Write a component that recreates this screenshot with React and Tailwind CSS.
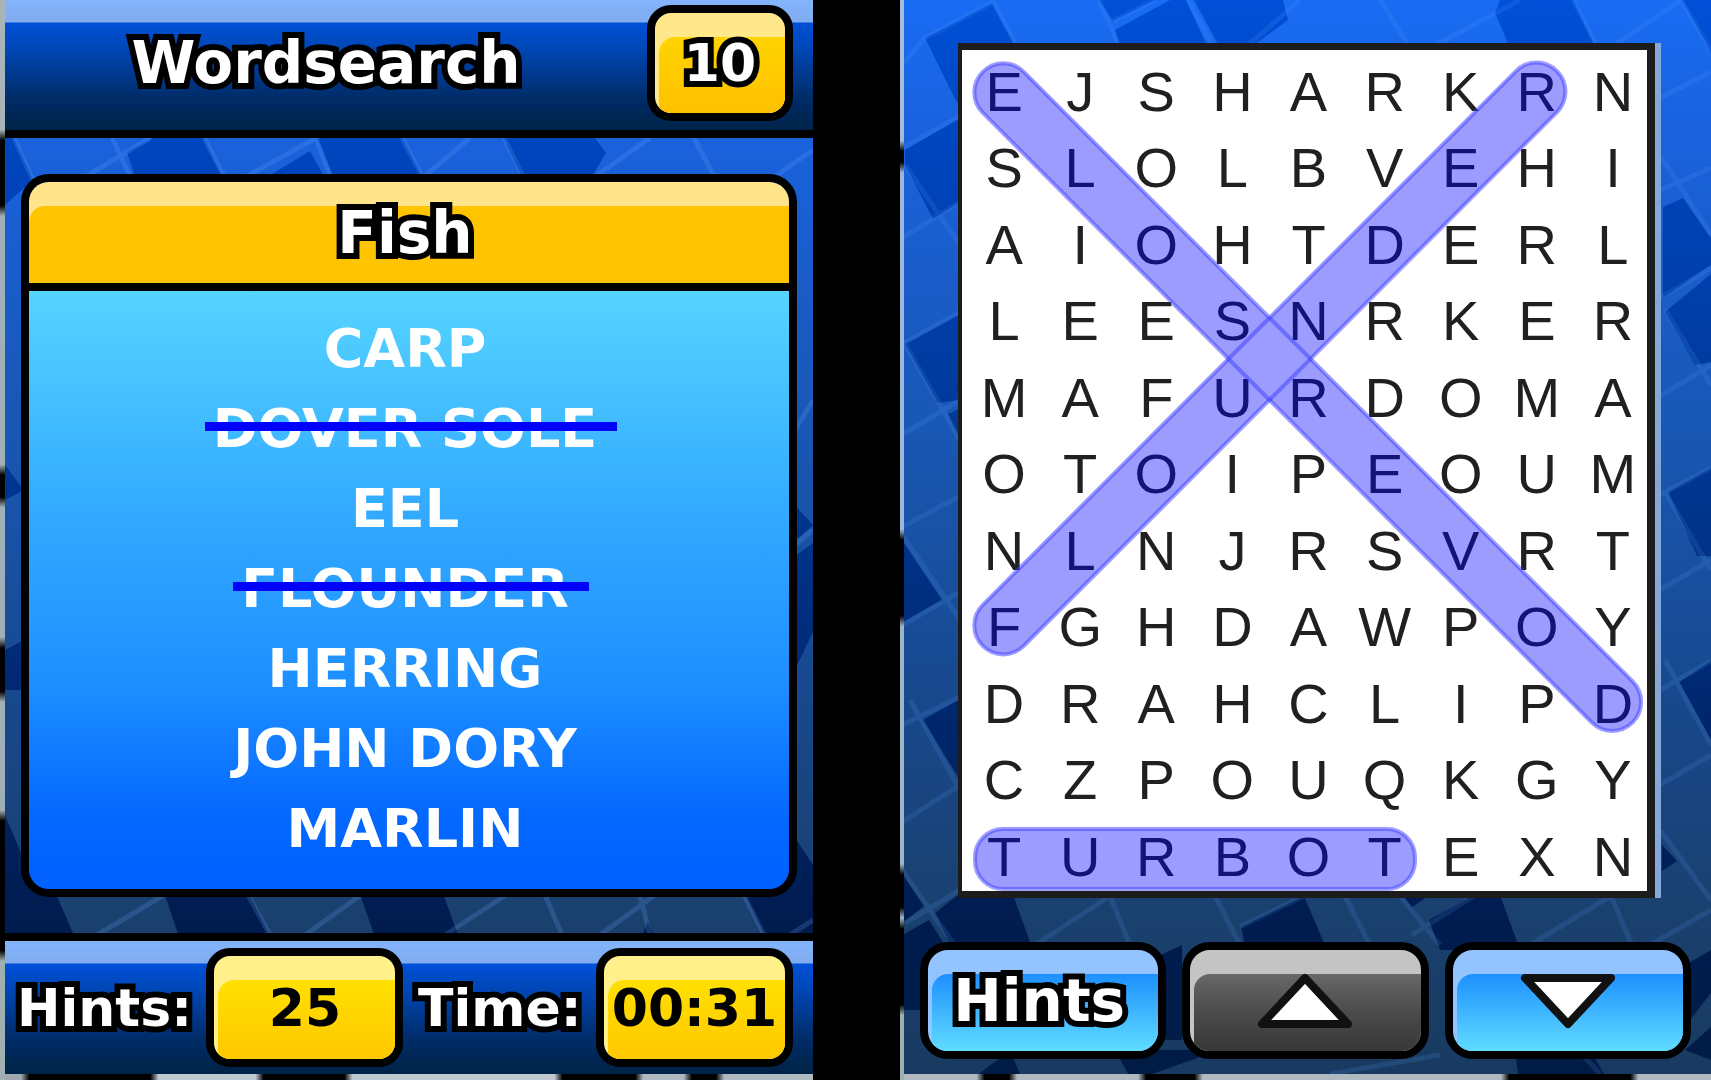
import React from "react";

const WORDS = [
  { text: "CARP", found: false },
  { text: "DOVER SOLE", found: true },
  { text: "EEL", found: false },
  { text: "FLOUNDER", found: true },
  { text: "HERRING", found: false },
  { text: "JOHN DORY", found: false },
  { text: "MARLIN", found: false },
];

const ROWS = [
  "EJSHARKRN",
  "SLOLBVEHI",
  "AIOHTDERL",
  "LEESNRKER",
  "MAFURDOMA",
  "OTOIPEOUM",
  "NLNJRSVRT",
  "FGHDAWPOY",
  "DRAHCLIPD",
  "CZPOUQKGY",
  "TURBOTEXN",
];

const OUTLINE =
  "text-white [-webkit-text-stroke:12px_black] [paint-order:stroke_fill] [stroke-linejoin:round]";

function TileGradients({ id }) {
  return (
    <defs>
      <linearGradient id={id + "Light"} gradientUnits="userSpaceOnUse" x1="0" y1="0" x2="0" y2="1080">
        <stop offset="0" stopColor="#186cf4" />
        <stop offset="0.12" stopColor="#1a62de" />
        <stop offset="0.4" stopColor="#1957b4" />
        <stop offset="0.65" stopColor="#18488c" />
        <stop offset="0.85" stopColor="#1a406e" />
        <stop offset="1" stopColor="#183a60" />
      </linearGradient>
      <linearGradient id={id + "Dark"} gradientUnits="userSpaceOnUse" x1="0" y1="0" x2="0" y2="1080">
        <stop offset="0" stopColor="#0050d8" />
        <stop offset="0.15" stopColor="#0044bc" />
        <stop offset="0.45" stopColor="#003690" />
        <stop offset="0.65" stopColor="#002870" />
        <stop offset="0.85" stopColor="#001c50" />
        <stop offset="1" stopColor="#001c44" />
      </linearGradient>
    </defs>
  );
}

function RightTiles() {
  return (
    <svg className="absolute inset-0 h-full w-full" viewBox="904 0 807 1074" preserveAspectRatio="none" aria-hidden="true">
      <TileGradients id="right" />
      <rect x="900" width="811" height="1080" fill="url(#rightLight)" />
      <g fill="url(#rightDark)">
        <path d="M925 38L992 3L1013 42L1020 60L957 103Z" />
        <path d="M1099 0H1155L1113 21Z" />
        <path d="M1115 30L1170 0H1186L1208 48H1120Z" />
        <path d="M1194 0H1283L1288 20L1250 48H1220Z" />
        <path d="M1500 0H1573L1596 48H1510L1495 13Z" />
        <path d="M1682 0H1711V52Z" />
        <path d="M905 150L960 118V202L933 219L905 165Z" />
        <path d="M905 344L960 314V400L938 403Z" />
        <path d="M948 414L960 408V440Z" />
        <path d="M902 540L942 600L902 623Z" />
        <path d="M923 720L960 699V780Z" />
        <path d="M902 873L924 906L902 923Z" />
        <path d="M902 935L929 920L948 950L920 1010H902Z" />
        <path d="M935 913L958 895H1013L1033 950H953Z" />
        <path d="M1241 927L1304 896L1327 950H1246Z" />
        <path d="M1402 895H1430L1412 907Z" />
        <path d="M1429 920L1474 895H1500L1520 950H1440Z" />
        <path d="M1663 207L1683 198L1711 238V265L1663 298Z" />
        <path d="M1665 312L1711 274V362L1695 365Z" />
        <path d="M1668 492L1711 468V556H1697Z" />
        <path d="M1679 682L1711 661V740Z" />
        <path d="M1662 845L1677 861L1662 871Z" />
        <path d="M1690 962L1711 950V993L1690 1020Z" />
        <path d="M1150 960L1182 945V1040L1160 1040Z" />
        <path d="M979 1074L1010 1050L1020 1074Z" />
        <path d="M1115 1050H1220L1152 1074H1128Z" />
        <path d="M1515 1050H1590L1604 1074H1518Z" />
        <path d="M1685 1050L1711 1027V1060Z" />
      </g>
      <g fill="none" stroke="#5fa0ff" strokeOpacity="0.15" strokeWidth="5">
        <path d="M902 65L925 38L992 3M992 0L1018 48M1113 21L1155 0M1099 0L1120 48M1188 0L1214 48M1245 48L1300 0M1380 0L1410 48M1430 48L1520 0M1573 0L1598 48M1610 48L1681 0L1711 50" />
        <path d="M902 148L960 116M905 165L960 245M902 238L960 202M902 344L960 312M905 344L960 440M902 435L960 400M902 527L960 496M902 535L960 620M902 625L960 592M902 725L960 697M910 700L960 790M902 822L960 785M902 870L958 950M905 923L960 890" />
        <path d="M1660 98L1711 72M1660 155L1711 235M1660 190L1711 168M1660 298L1711 268M1665 310L1711 385M1660 396L1711 365M1660 495L1711 468M1665 492L1711 570M1660 590L1711 560M1660 690L1711 661M1665 660L1711 745M1660 785L1711 755M1660 830L1711 900" />
        <path d="M1035 945L1110 896M1110 896L1130 945M1215 896L1240 945M1240 927L1304 896M1345 896L1370 945M1400 896L1440 945M1412 935L1474 896M1530 945L1611 896M1611 896L1632 945M1650 945L1711 910M1330 1074L1440 1055M1580 1052L1600 1074" />
      </g>
    </svg>
  );
}

function LeftTiles() {
  return (
    <svg className="absolute inset-0 h-full w-full" viewBox="5 0 808 1074" preserveAspectRatio="none" aria-hidden="true">
      <TileGradients id="left" />
      <rect x="5" width="808" height="1080" fill="url(#leftLight)" />
      <g fill="url(#leftDark)">
        <path d="M5 130H10L33 180L5 205Z" />
        <path d="M127 152L153 138V130H200L224 180H136Z" />
        <path d="M262 180L310 151L326 180Z" />
        <path d="M314 130H398L424 180H334Z" />
        <path d="M500 130H589L606 153L590 180H523Z" />
        <path d="M5 465L24 490L5 500Z" />
        <path d="M5 650L24 640V690H5Z" />
        <path d="M5 815L24 860V890L5 910Z" />
        <path d="M790 500L813 525L790 545Z" />
        <path d="M790 560L813 543V632L790 680Z" />
        <path d="M790 830L813 865V900H790Z" />
        <path d="M5 880H50L76 940H5Z" />
        <path d="M160 880H242L272 940H180Z" />
        <path d="M355 880H438L460 940H376Z" />
        <path d="M640 940L648 922L656 940Z" />
        <path d="M738 880H813V940H767Z" />
      </g>
      <g fill="none" stroke="#6fa8ff" strokeOpacity="0.2" strokeWidth="5">
        <path d="M14 138L33 180M80 180L150 138M112 138L132 180M204 138L226 180M240 180L316 138L332 180M402 138L424 180M420 180L470 138M504 138L525 180M590 180L650 138M694 138L716 180M770 180L813 150M795 430L813 400M795 545L813 530" />
        <path d="M97 935L164 895M248 895L270 935M305 935L361 895M445 935L506 895M545 895L562 935M600 935L655 895M640 895L650 935M744 895L764 935M790 935L813 920" />
      </g>
    </svg>
  );
}

function Glossy({ as: Tag = "div", sheen, body, className, children, ...rest }) {
  return (
    <Tag className={"relative overflow-hidden border-8 border-black " + sheen + " " + className} {...rest}>
      <span className={"absolute top-6 right-0 bottom-0 left-1 rounded-tl-2xl " + body} aria-hidden="true" />
      <span className="relative flex h-full items-center justify-center">{children}</span>
    </Tag>
  );
}

function Arrow({ down }) {
  return (
    <svg className="h-14 w-24" viewBox="0 0 96 56" aria-hidden="true">
      <path
        d={down ? "M5 5H91L48 51Z" : "M5 51H91L48 5Z"}
        fill="#fff"
        stroke="#111"
        strokeWidth="8"
        strokeLinejoin="round"
      />
    </svg>
  );
}

function Highlights() {
  const shapes = (
    <>
      <rect x="-30" y="-29" width="919" height="58" rx="29" transform="translate(42 43) rotate(45)" />
      <rect x="-30" y="-29" width="812" height="58" rx="29" transform="translate(42 574) rotate(-45)" />
      <rect x="13" y="778" width="440" height="60" rx="28" />
    </>
  );
  return (
    <svg className="absolute inset-0 h-full w-full" viewBox="0 0 685 840" preserveAspectRatio="none" aria-hidden="true">
      <g fill="#0000ff" opacity="0.39">{shapes}</g>
      <g fill="none" stroke="#3c3cff" strokeOpacity="0.5" strokeWidth="4">{shapes}</g>
    </svg>
  );
}

const BAR = "bg-[linear-gradient(#84b4fc,#80acf0_22px,#0050d8_23px,#0046b4_50px,#002c68_98px,#002448_130px)]";

export default function App() {
  return (
    <main className="grid min-h-screen grid-cols-[813fr_87fr_811fr] bg-black font-['DejaVu_Sans',sans-serif] font-bold">
      <section className="flex min-w-0" aria-label="Word list">
        <div className="w-[5px] shrink-0 bg-[linear-gradient(#a8b4b8_0_12%,#000_13%_19%,#a0b0b8_20%_43%,#000_44%_46%,#a0b0b8_47%_59%,#000_60%_64%,#a0b0b8_65%_75%,#000_76%_88%,#a0b0b0_89%)]" />
        <div className="flex min-w-0 flex-1 flex-col">
          <div className="relative flex flex-1 flex-col">
            <LeftTiles />
            <header className={"relative flex h-[138px] items-center border-b-8 border-black pr-5 pb-1 " + BAR}>
              <h1 className={"flex-1 text-center text-[58px] leading-none " + OUTLINE}>Wordsearch</h1>
              <Glossy sheen="bg-[#ffe88c]" body="bg-[linear-gradient(#ffd400,#ffc000)]" className="h-[116px] w-[146px] rounded-3xl">
                <span className={"text-[52px] leading-none " + OUTLINE}>10</span>
              </Glossy>
            </header>

            <div className="relative mx-4 my-9 flex flex-1 flex-col overflow-hidden rounded-[28px] border-8 border-black">
              <div className="relative h-[109px] border-b-8 border-black bg-[#ffe48a]">
                <span className="absolute top-6 right-0 bottom-0 left-0 rounded-tl-2xl bg-[#ffc400]" aria-hidden="true" />
                <h2 className={"relative flex h-full items-center justify-center pr-2 text-[58px] leading-none " + OUTLINE}>Fish</h2>
              </div>
              <ul className="flex-1 bg-[linear-gradient(#56d4ff,#34acff_35%,#1e90ff_65%,#0468ff_88%,#0060ff)] pt-[18px] pr-2 text-center text-[54px] leading-[80px] text-white">
                {WORDS.map((w) => (
                  <li key={w.text}>
                    <span className="relative inline-block">
                      {w.text}
                      {w.found && <span className="absolute top-[33px] -right-5 -left-2 h-[9px] bg-[#0000ff]" />}
                    </span>
                  </li>
                ))}
              </ul>
            </div>

            <footer className={"relative flex h-[141px] items-center justify-between border-t-8 border-black pr-5 pl-3 " + BAR}>
              <span className={"text-[52px] leading-none " + OUTLINE}>Hints:</span>
              <Glossy sheen="bg-[#fff08c]" body="bg-[linear-gradient(#ffe000,#ffc800)]" className="h-[119px] w-[197px] rounded-3xl">
                <span className="text-[52px] leading-none text-black">25</span>
              </Glossy>
              <span className={"text-[52px] leading-none " + OUTLINE}>Time:</span>
              <Glossy sheen="bg-[#fff08c]" body="bg-[linear-gradient(#ffe000,#ffc800)]" className="h-[119px] w-[197px] rounded-3xl">
                <span className="text-[52px] leading-none text-black">00:31</span>
              </Glossy>
            </footer>
          </div>
          <div className="h-[6px] bg-[linear-gradient(90deg,#a0a8b0_0_2%,#000_3%_18%,#c0c8d0_19%_31%,#000_32%_42%,#c0c8d0_43%_68%,#000_69%_78%,#b0b8c0_79%_84%,#000_85%_88%,#b0b8c0_89%)]" />
        </div>
      </section>

      <div />

      <section className="flex min-w-0" aria-label="Letter grid">
        <div className="w-[4px] shrink-0 bg-[linear-gradient(#a8bcd8_0_13%,#000_14%_15%,#a0b8d8_16%_49%,#000_50%_57%,#a0b4c8_58%_80%,#000_81%_84%,#a0b4c8_85%,#000_86%_93%,#a0b0b0_94%)]" />
        <div className="flex min-w-0 flex-1 flex-col">
          <div className="relative flex flex-1 flex-col pt-[43px] pb-[15px]">
            <RightTiles />
            <div className="relative mr-[56px] ml-[54px] flex-1 border-t-[7px] border-r-8 border-b-[7px] border-l-4 border-[#1c1c1c] bg-white shadow-[6px_0_0_#84a8d8]">
              <div className="-mr-1 grid h-full grid-cols-9 grid-rows-[repeat(10,minmax(0,76fr))_minmax(0,68fr)] pt-2 pl-1 text-center font-['Liberation_Sans',Arial,sans-serif] text-[56px] leading-[68px] font-normal text-[#202020]">
                {ROWS.flatMap((row, r) =>
                  row.split("").map((letter, c) => <span key={r + "-" + c}>{letter}</span>)
                )}
              </div>
              <Highlights />
            </div>
            <div className="relative mt-11 mr-5 ml-4 grid grid-cols-3 gap-4">
              <Glossy as="button" type="button" sheen="bg-[#94c4ff]" body="bg-[linear-gradient(#1e90ff,#60dcff)]" className="h-[117px] rounded-[28px]">
                <span className={"pr-2 text-[58px] leading-none " + OUTLINE}>Hints</span>
              </Glossy>
              <Glossy as="button" type="button" aria-label="Scroll up" sheen="bg-[#c4c4c4]" body="bg-[linear-gradient(#686868,#4c4a4c_50%,#383838)]" className="h-[117px] rounded-[28px]">
                <Arrow />
              </Glossy>
              <Glossy as="button" type="button" aria-label="Scroll down" sheen="bg-[#94c4ff]" body="bg-[linear-gradient(#1e90ff,#60dcff)]" className="h-[117px] rounded-[28px]">
                <Arrow down />
              </Glossy>
            </div>
          </div>
          <div className="h-[6px] bg-[linear-gradient(90deg,#b0b8c0_0_9%,#000_10%_13%,#b0b8c0_14%_29%,#000_30%_36%,#b0b8c0_37%_74%,#000_75%_90%,#b0b8c0_91%)]" />
        </div>
      </section>
    </main>
  );
}
